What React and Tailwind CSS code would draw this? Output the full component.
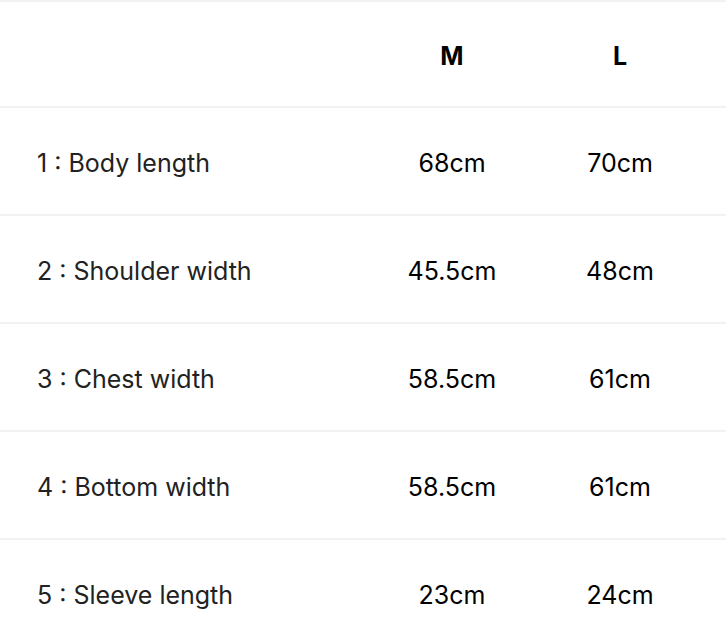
const rows = [
  ["1 : Body length", "68cm", "70cm"],
  ["2 : Shoulder width", "45.5cm", "48cm"],
  ["3 : Chest width", "58.5cm", "61cm"],
  ["4 : Bottom width", "58.5cm", "61cm"],
  ["5 : Sleeve length", "23cm", "24cm"],
];

export default function App() {
  return (
    <div className="h-[642px] w-[726px] overflow-hidden bg-white font-['Inter','Liberation_Sans',sans-serif]">
      <div className="border-t-2 border-[#f2f2f2]">
        <div className="grid h-[106px] grid-cols-[368px_168px_168px] items-center border-b-2 border-[#f2f2f2] pt-[5px] text-[25px] font-bold text-black">
          <div />
          <div className="text-center">M</div>
          <div className="text-center">L</div>
        </div>
        {rows.map(([label, m, l]) => (
          <div
            key={label}
            className="grid h-[108px] grid-cols-[368px_168px_168px] items-center border-b-2 border-[#f2f2f2] pt-[6px] text-[25px]"
          >
            <div className="pl-[37px] text-[#222]">{label}</div>
            <div className="text-center text-black">{m}</div>
            <div className="text-center text-black">{l}</div>
          </div>
        ))}
      </div>
    </div>
  );
}
